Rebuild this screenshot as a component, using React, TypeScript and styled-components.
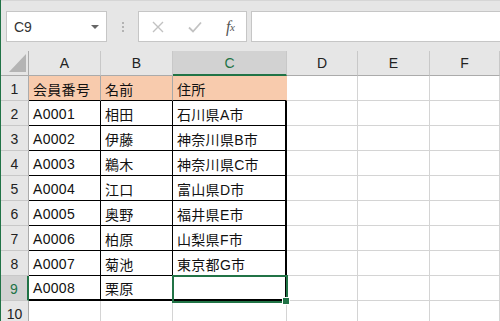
import styled, { createGlobalStyle } from 'styled-components';

const GlobalStyle = createGlobalStyle`
  html, body {
    margin: 0;
    padding: 0;
    overflow: hidden;
    background: #ffffff;
  }
  body {
    font-family: 'Liberation Sans', 'Noto Sans CJK JP', sans-serif;
  }
`;

const GREEN = '#217346';
const GRID = '#d4d4d4';
const HEAD_BG = '#e6e6e6';
const HEAD_SEL = '#d2d2d2';
const HEAD_LINE = '#ababab';

const Window = styled.div`
  width: 499px;
  height: 321px;
  border-left: 1px solid ${GREEN};
  overflow: hidden;
  background: #ffffff;
`;

const Toolbar = styled.div`
  height: 51px;
  box-sizing: border-box;
  background: ${HEAD_BG};
  border-top: 1px solid #d6d6d6;
  display: flex;
  align-items: flex-start;
  padding: 10px 0 0 5px;
`;

const Box = styled.div`
  height: 31px;
  box-sizing: border-box;
  background: #ffffff;
  border: 1px solid #c6c6c6;
  display: flex;
  align-items: center;
`;

const NameBox = styled(Box)`
  width: 101px;
  padding: 0 7px;
  justify-content: space-between;
`;

const NameText = styled.span`
  font-size: 14px;
  color: #333333;
`;

const DropArrow = styled.span`
  width: 0;
  height: 0;
  border-left: 4px solid transparent;
  border-right: 4px solid transparent;
  border-top: 4px solid #666666;
  margin-top: 1px;
`;

const Grip = styled.div`
  width: 31px;
  height: 31px;
  display: flex;
  flex-direction: column;
  align-items: center;
  justify-content: center;
  gap: 2px;

  span {
    width: 2px;
    height: 2px;
    background: #b3b3b3;
  }
`;

const ButtonsBox = styled(Box)`
  width: 109px;
  padding-left: 13px;
  gap: 24px;
`;

const FxLabel = styled.span`
  font-family: 'Liberation Serif', 'DejaVu Serif', serif;
  font-style: italic;
  font-size: 16px;
  color: #555555;
  letter-spacing: -0.5px;

  sub {
    font-size: 11px;
    vertical-align: 1px;
  }
`;

const FormulaInput = styled(Box)`
  flex: 1;
  margin-left: 4px;
  border-right: none;
`;

const Sheet = styled.div`
  display: grid;
  grid-template-columns: 28px 72px 72px 114px 71px 72px 1fr;
  grid-auto-rows: 25px;
`;

const Corner = styled.div`
  background: ${HEAD_BG};
  border-right: 1px solid ${HEAD_LINE};
  border-bottom: 1px solid ${HEAD_LINE};
  box-sizing: border-box;

  svg {
    display: block;
  }
`;

const ColHeader = styled.div<{ $selected?: boolean }>`
  box-sizing: border-box;
  background: ${p => (p.$selected ? HEAD_SEL : HEAD_BG)};
  color: ${p => (p.$selected ? GREEN : '#222222')};
  border-right: 1px solid #c8c8c8;
  border-bottom: ${p => (p.$selected ? `2px solid ${GREEN}` : `1px solid ${HEAD_LINE}`)};
  display: flex;
  align-items: center;
  justify-content: center;
  font-size: 14px;
  padding-top: ${p => (p.$selected ? '1px' : '0')};
`;

const RowHeader = styled.div<{ $selected?: boolean }>`
  box-sizing: border-box;
  background: ${p => (p.$selected ? HEAD_SEL : HEAD_BG)};
  color: ${p => (p.$selected ? GREEN : '#222222')};
  border-right: ${p => (p.$selected ? `2px solid ${GREEN}` : `1px solid ${HEAD_LINE}`)};
  border-bottom: 1px solid #c8c8c8;
  display: flex;
  align-items: center;
  justify-content: center;
  font-size: 14px;
  padding-top: 1px;
`;

type CellProps = {
  $fill?: string;
  $right: string;
  $bottom: string;
};

const Cell = styled.div<CellProps>`
  box-sizing: border-box;
  position: relative;
  background: ${p => p.$fill || '#ffffff'};
  border-right: ${p => p.$right};
  border-bottom: ${p => p.$bottom};
  display: flex;
  align-items: center;
  padding: 1px 0 0 4px;
  font-size: 14px;
  letter-spacing: 0.3px;
  color: #111111;
  white-space: nowrap;
`;

const Selection = styled.div`
  position: absolute;
  left: -1px;
  top: -1px;
  width: 116px;
  height: 28px;
  box-sizing: border-box;
  border: 2px solid ${GREEN};
  pointer-events: none;
  z-index: 2;
`;

const FillHandle = styled.div`
  position: absolute;
  left: 110px;
  top: 22px;
  width: 6px;
  height: 6px;
  background: ${GREEN};
  outline: 1px solid #ffffff;
  z-index: 3;
`;

const columns = ['A', 'B', 'C', 'D', 'E', 'F'];

const data: string[][] = [
  ['会員番号', '名前', '住所'],
  ['A0001', '相田', '石川県A市'],
  ['A0002', '伊藤', '神奈川県B市'],
  ['A0003', '鵜木', '神奈川県C市'],
  ['A0004', '江口', '富山県D市'],
  ['A0005', '奥野', '福井県E市'],
  ['A0006', '柏原', '山梨県F市'],
  ['A0007', '菊池', '東京都G市'],
  ['A0008', '栗原', ''],
  [],
];

const SEL_ROW = 9;
const SEL_COL = 2;

function cellBorders(r: number, c: number) {
  const inTable = c <= 2 && r <= 9;
  let right = `1px solid ${GRID}`;
  let bottom = `1px solid ${GRID}`;
  if (r === 1 && c <= 2) {
    right = c < 2 ? '1px solid #a8a8a8' : '1px solid #f8cbad';
    bottom = '1px solid #000000';
  } else if (inTable) {
    right = c === 2 ? '2px solid #000000' : '1px solid #000000';
    bottom = r === 9 ? '2px solid #000000' : '1px solid #000000';
  }
  return { right, bottom };
}

export default function App() {
  return (
    <>
      <GlobalStyle />
      <Window>
        <Toolbar>
          <NameBox>
            <NameText>C9</NameText>
            <DropArrow />
          </NameBox>
          <Grip>
            <span />
            <span />
            <span />
          </Grip>
          <ButtonsBox>
            <svg width="12" height="12" viewBox="0 0 12 12">
              <path d="M1 1 L11 11 M11 1 L1 11" stroke="#c2c2c2" strokeWidth="1.4" fill="none" />
            </svg>
            <svg width="14" height="12" viewBox="0 0 14 12">
              <path d="M1 6.5 L5 10.5 L13 1.5" stroke="#c2c2c2" strokeWidth="1.8" fill="none" />
            </svg>
            <FxLabel>
              f<sub>x</sub>
            </FxLabel>
          </ButtonsBox>
          <FormulaInput />
        </Toolbar>
        <Sheet>
          <Corner>
            <svg width="27" height="24" viewBox="0 0 27 24">
              <polygon points="25,3 25,21 8,21" fill="#b4b4b4" />
            </svg>
          </Corner>
          {columns.map((name, c) => (
            <ColHeader key={`h${c}`} $selected={c === SEL_COL}>
              {name}
            </ColHeader>
          ))}
          {data.map((row, ri) => {
            const r = ri + 1;
            return [
              <RowHeader key={`r${r}`} $selected={r === SEL_ROW}>
                {r}
              </RowHeader>,
              ...columns.map((_, c) => {
                const { right, bottom } = cellBorders(r, c);
                const isSel = r === SEL_ROW && c === SEL_COL;
                return (
                  <Cell
                    key={`c${r}-${c}`}
                    $fill={r === 1 && c <= 2 ? '#f8cbad' : undefined}
                    $right={right}
                    $bottom={bottom}
                  >
                    {row[c] || ''}
                    {isSel && (
                      <>
                        <Selection />
                        <FillHandle />
                      </>
                    )}
                  </Cell>
                );
              }),
            ];
          })}
        </Sheet>
      </Window>
    </>
  );
}
